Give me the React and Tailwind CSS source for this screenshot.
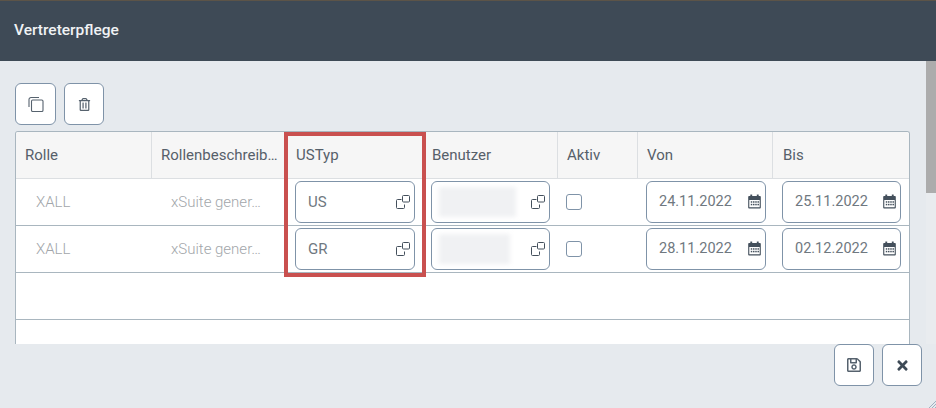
import React from 'react'
import { FaRegSave, FaRegTrashAlt, FaTimes } from 'react-icons/fa'

const rows = [
  { usTyp: 'US', blurWidth: 'w-[77px]', von: '24.11.2022', bis: '25.11.2022' },
  { usTyp: 'GR', blurWidth: 'w-[71px]', von: '28.11.2022', bis: '02.12.2022' }
]

const headers = [
  { label: 'Rolle', pad: 'pl-[9px]' },
  { label: 'Rollenbeschreib…', pad: 'pl-[9px]' },
  { label: 'USTyp', pad: 'pl-[10px]' },
  { label: 'Benutzer', pad: 'pl-[9px]' },
  { label: 'Aktiv', pad: 'pl-[9px]' },
  { label: 'Von', pad: 'pl-[9px]' },
  { label: 'Bis', pad: 'pl-[10px]' }
]

const gridCols = 'grid grid-cols-[136px_134px_137px_135px_80px_135px_136px]'

const PopupIcon = () => (
  <svg width="14" height="14" viewBox="0 0 14 14" fill="none" stroke="#44505c" strokeWidth="1">
    <path d="M5.5 4.5H1.5a1 1 0 0 0-1 1v7a1 1 0 0 0 1 1h6a1 1 0 0 0 1-1V9.5" />
    <rect x="6.5" y="0.5" width="7" height="6.5" rx="1" />
  </svg>
)

const CalendarIcon = () => (
  <svg width="13" height="15" viewBox="0 0 14 15" fill="#44505c" className="mb-[1px]">
    <rect x="2.5" y="0" width="2" height="3" />
    <rect x="9.5" y="0" width="2" height="3" />
    <path d="M1.2 1.5h11.6a1 1 0 0 1 1 1V14a1 1 0 0 1-1 1H1.2a1 1 0 0 1-1-1V2.5a1 1 0 0 1 1-1zm.2 4.5v7.8h11.2V6z" fillRule="evenodd" />
    <rect x="3" y="7.2" width="1.6" height="1.6" />
    <rect x="5.4" y="7.2" width="1.6" height="1.6" />
    <rect x="7.8" y="7.2" width="1.6" height="1.6" />
    <rect x="10.2" y="7.2" width="1.6" height="1.6" />
    <rect x="3" y="10" width="1.6" height="1.6" />
    <rect x="5.4" y="10" width="1.6" height="1.6" />
    <rect x="7.8" y="10" width="1.6" height="1.6" />
    <rect x="10.2" y="10" width="1.6" height="1.6" />
  </svg>
)

const CopyIcon = () => (
  <svg width="16" height="16" viewBox="0 0 16 16" fill="none" stroke="#56626e" strokeWidth="1.1">
    <path d="M11 1.5H3a2 2 0 0 0-2 2V11" />
    <rect x="3.5" y="4" width="11.5" height="11.5" rx="1.2" />
  </svg>
)

const ToolButton = ({ children, className = 'w-[40px]' }) => (
  <button className={`flex h-[42px] items-center justify-center rounded-md border border-[#7f93a8] bg-white ${className}`}>
    {children}
  </button>
)

const FieldBox = ({ children, icon, className = 'w-[120px]' }) => (
  <div className={`flex h-[42px] items-center justify-between rounded-md border border-[#7f93a8] bg-white pr-[4px] ${className}`}>
    {children}
    {icon}
  </div>
)

const DateField = ({ value, className }) => (
  <FieldBox icon={<CalendarIcon />} className={className}>
    <span className="pl-[12px] text-[14.5px] text-[#6f7880]">{value}</span>
  </FieldBox>
)

const App = () => {
  return (
    <div className="relative flex h-[408px] w-[936px] flex-col overflow-hidden bg-[#e6eaee] font-['Roboto',sans-serif]">
      <div className="flex h-[61px] shrink-0 items-center border-t border-[#5c5448] bg-[#3e4a56] pb-[1px] pl-[14px] text-[15.5px] font-medium text-[#f0f2f4]">
        Vertreterpflege
      </div>

      <div className="flex min-h-0 flex-1">
        <div className="min-w-0 flex-1 pl-[15px] pt-[22px]">
          <div className="flex gap-[8px]">
            <ToolButton className="w-[41px]"><CopyIcon /></ToolButton>
            <ToolButton><FaRegTrashAlt className="text-[13px] text-[#56626e]" /></ToolButton>
          </div>

          <div className="mt-[6px] h-[213px] w-[895px] overflow-hidden rounded-t-[3px] border-x border-t border-[#a9b6bf] bg-white">
            <div className={`${gridCols} h-[47px] border-b border-[#dcdfe2] bg-[#f6f6f6]`}>
              {headers.map((col, i) => (
                <div
                  key={col.label}
                  className={`flex items-center whitespace-nowrap text-[15px] text-[#56606a] ${col.pad} ${i < headers.length - 1 ? 'border-r border-[#dcdfe2]' : ''}`}
                >
                  {col.label}
                </div>
              ))}
            </div>

            {rows.map((row) => (
              <div key={row.usTyp} className={`${gridCols} h-[47px] items-center border-b border-[#a9b6bf]`}>
                <div className="pl-[20px] text-[15px] font-light text-[#a2a6aa]">XALL</div>
                <div className="pl-[19px] text-[15px] font-light text-[#a2a6aa]">xSuite gener…</div>
                <div className="pl-[9px]">
                  <FieldBox icon={<PopupIcon />}>
                    <span className="pl-[12px] text-[15px] text-[#6f7880]">{row.usTyp}</span>
                  </FieldBox>
                </div>
                <div className="pl-[8px]">
                  <FieldBox icon={<PopupIcon />} className="w-[119px]">
                    <div className={`ml-[7px] h-[30px] bg-[#f0f1f3] blur-[2px] ${row.blurWidth}`} />
                  </FieldBox>
                </div>
                <div className="pl-[8px]">
                  <div className="h-[16px] w-[16px] rounded-[3px] border border-[#7f93a8] bg-white" />
                </div>
                <div className="pl-[8px]"><DateField value={row.von} /></div>
                <div className="pl-[9px]"><DateField value={row.bis} className="w-[119px]" /></div>
              </div>
            ))}

            <div className="h-[47px] border-b border-[#a9b6bf]" />
          </div>
        </div>

        <div className="w-[10px] shrink-0 bg-[#e9ecef]">
          <div className="h-[132px] bg-[#acacac]" />
        </div>
      </div>

      <div className="flex h-[64px] shrink-0 justify-end gap-[8px] bg-[#e6eaee] pr-[14px]">
        <ToolButton><FaRegSave className="text-[16px] text-[#56626e]" /></ToolButton>
        <ToolButton><FaTimes className="text-[15px] text-[#3e4a56]" /></ToolButton>
      </div>

      {/* highlight round the USTyp column */}
      <div className="pointer-events-none absolute left-[284px] top-[132px] h-[145px] w-[142px] border-[4px] border-[#c9504f]" />

      {/* resize grip */}
      <svg className="absolute bottom-0 right-0" width="7" height="7" viewBox="0 0 7 7" stroke="#9fb0c0" strokeWidth="1">
        <path d="M0 7L7 0M3 7L7 3M6 7L7 6" />
      </svg>
    </div>
  )
}

export default App
